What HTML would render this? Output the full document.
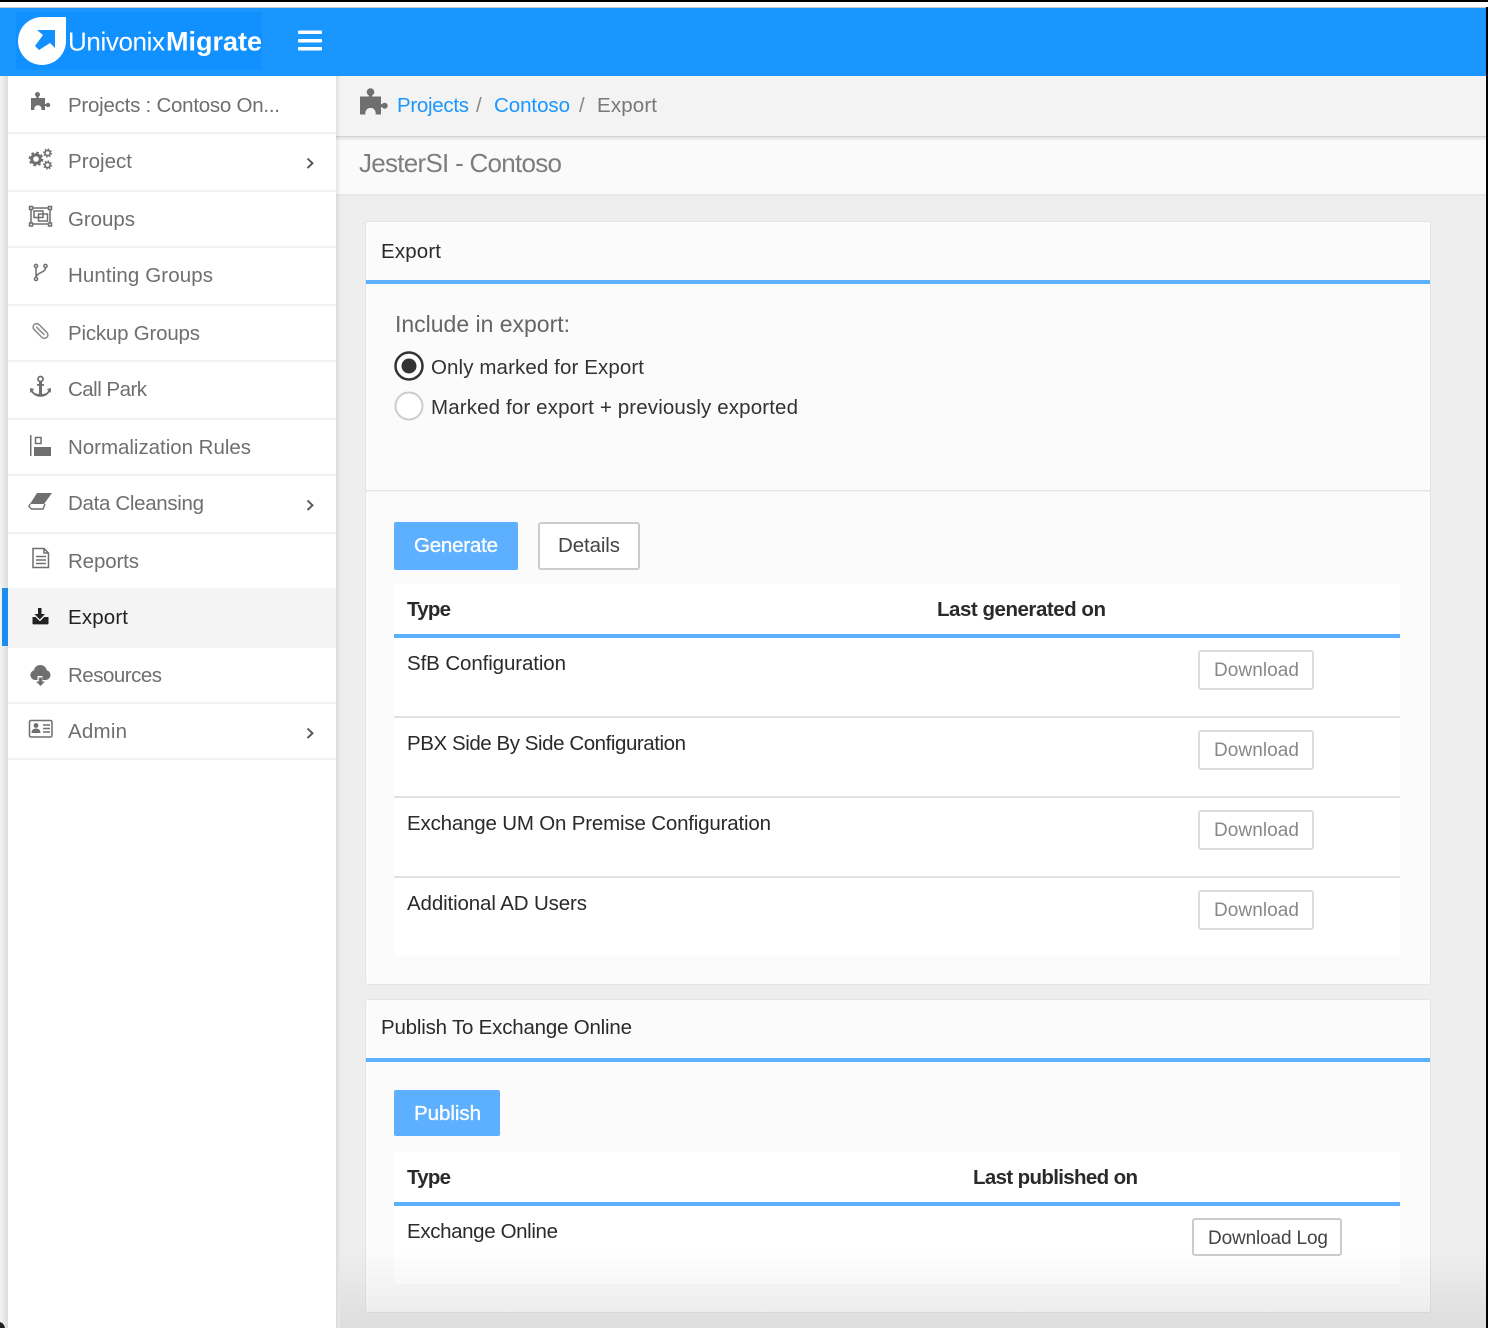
<!DOCTYPE html>
<html><head><meta charset="utf-8"><title>UnivonixMigrate</title>
<style>
html,body{margin:0;padding:0;background:#fff;width:1488px;height:1328px;overflow:hidden}
svg{display:block}
text{font-family:"Liberation Sans",sans-serif;font-size:20.5px;fill:#333}
.n{fill:#6f6f6f}
.b{font-weight:700;fill:#2a2a2a}
.d{font-size:19px;fill:#888}
.i{fill:#6f6f6f}
.o{fill:none;stroke:#6f6f6f;stroke-width:1.5}
.w{fill:#fff;stroke:#fff;stroke-width:.35}
</style></head><body>
<svg width="1488" height="1328" viewBox="0 0 1488 1328" xmlns="http://www.w3.org/2000/svg">
<defs>
<linearGradient id="lg" x1="0" x2="1" y1="0" y2="0"><stop offset="0" stop-color="#f4f4f4"/><stop offset="1" stop-color="#dcdcdc"/></linearGradient>
<linearGradient id="bot" x1="0" x2="0" y1="0" y2="1"><stop offset="0" stop-color="#000" stop-opacity="0"/><stop offset="1" stop-color="#000" stop-opacity=".07"/></linearGradient>
<linearGradient id="sh" x1="0" x2="1" y1="0" y2="0"><stop offset="0" stop-color="#000" stop-opacity=".08"/><stop offset="1" stop-color="#000" stop-opacity="0"/></linearGradient>
<linearGradient id="sv" x1="0" x2="0" y1="0" y2="1"><stop offset="0" stop-color="#000" stop-opacity=".13"/><stop offset="1" stop-color="#000" stop-opacity="0"/></linearGradient>
</defs>

<!-- window chrome -->
<rect width="1488" height="1328" fill="#eee"/>
<rect width="1488" height="2" fill="#000"/>
<rect y="2" width="1488" height="5" fill="#fff"/>
<rect y="7" width="1488" height="1" fill="#ccc"/>

<!-- main content -->
<rect x="336" y="76" width="1150" height="60" fill="#f3f3f3"/>
<rect x="336" y="137" width="1150" height="57" fill="#fafafa"/>
<rect x="336" y="136" width="1150" height="5" fill="url(#sv)"/>
<rect x="336" y="194" width="1150" height="1.5" fill="#e6e6e6"/>

<!-- card 1 -->
<rect x="365" y="221" width="1066" height="764" rx="3" fill="#e4e4e4"/>
<rect x="366" y="222" width="1064" height="762" rx="2" fill="#fbfbfb"/>
<rect x="366" y="280" width="1064" height="4" fill="#5eb1ff"/>
<rect x="366" y="490" width="1064" height="1.5" fill="#e6e6e6"/>
<rect x="394" y="584" width="1006" height="372" fill="#fff"/>
<rect x="394" y="634" width="1006" height="4" fill="#5eb1ff"/>
<rect x="394" y="716" width="1006" height="2" fill="#e2e2e2"/>
<rect x="394" y="796" width="1006" height="2" fill="#e2e2e2"/>
<rect x="394" y="876" width="1006" height="2" fill="#e2e2e2"/>

<!-- card 2 -->
<rect x="365" y="999" width="1066" height="314" rx="3" fill="#e4e4e4"/>
<rect x="366" y="1000" width="1064" height="312" rx="2" fill="#fbfbfb"/>
<rect x="366" y="1058" width="1064" height="4" fill="#5eb1ff"/>
<rect x="394" y="1152" width="1006" height="132" fill="#fff"/>
<rect x="394" y="1202" width="1006" height="4" fill="#5eb1ff"/>

<!-- buttons -->
<rect x="394" y="522" width="124" height="48" rx="2" fill="#5cb0ff"/>
<rect x="539" y="523" width="100" height="46" rx="2" fill="#fff" stroke="#ccc" stroke-width="2"/>
<rect x="1199" y="651" width="114" height="38" rx="2" fill="#fff" stroke="#ddd" stroke-width="2"/>
<rect x="1199" y="731" width="114" height="38" rx="2" fill="#fff" stroke="#ddd" stroke-width="2"/>
<rect x="1199" y="811" width="114" height="38" rx="2" fill="#fff" stroke="#ddd" stroke-width="2"/>
<rect x="1199" y="891" width="114" height="38" rx="2" fill="#fff" stroke="#ddd" stroke-width="2"/>
<rect x="394" y="1090" width="106" height="46" rx="2" fill="#5cb0ff"/>

<!-- radios -->
<circle cx="409" cy="366" r="13.5" fill="#fff" stroke="#333" stroke-width="2.5"/>
<circle cx="409" cy="366" r="7.5" fill="#333"/>
<circle cx="409" cy="406" r="13.5" fill="#fff" stroke="#ccc" stroke-width="2"/>

<!-- bottom fade -->
<rect x="340" y="1250" width="1146" height="78" fill="url(#bot)"/>
<rect x="1193" y="1219" width="148" height="36" rx="2" fill="#fff" stroke="#ccc" stroke-width="2"/>

<!-- sidebar -->
<rect x="0" y="76" width="8" height="1252" fill="url(#lg)"/>
<rect x="8" y="76" width="328" height="1252" fill="#fff"/>
<rect x="336" y="76" width="5" height="1252" fill="url(#sh)"/>
<rect x="8" y="132" width="328" height="2" fill="#f1f1f1"/>
<rect x="8" y="190" width="328" height="2" fill="#f1f1f1"/>
<rect x="8" y="246" width="328" height="2" fill="#f1f1f1"/>
<rect x="8" y="304" width="328" height="2" fill="#f1f1f1"/>
<rect x="8" y="360" width="328" height="2" fill="#f1f1f1"/>
<rect x="8" y="418" width="328" height="2" fill="#f1f1f1"/>
<rect x="8" y="474" width="328" height="2" fill="#f1f1f1"/>
<rect x="8" y="532" width="328" height="2" fill="#f1f1f1"/>
<rect x="8" y="588" width="328" height="60" fill="#f4f4f4"/>
<rect x="2" y="588" width="6" height="58" fill="#1a8eee"/>
<rect x="8" y="702" width="328" height="2" fill="#f1f1f1"/>
<rect x="8" y="758" width="328" height="2" fill="#f1f1f1"/>
<path d="M0 1322q4 1 5 6H0z" fill="#222"/>

<!-- header -->
<rect y="8" width="1486" height="68" fill="#1a96ff"/>
<rect x="16" y="12" width="246" height="58" fill="#1190ff"/>
<path d="M42 17H66V41A24 24 0 1 1 42 17Z" fill="#fff"/>
<path d="M37 30H55V48L50 43 39 50 35 46 43 35Z" fill="#1190ff"/>
<text x="68" y="50.500" style="font-size:26px;fill:#fff" textLength="97" lengthAdjust="spacing">Univonix</text>
<text x="166" y="50.500" style="font-size:27px;font-weight:700;fill:#fff" textLength="96" lengthAdjust="spacing">Migrate</text>
<rect x="298" y="30.500" width="24" height="3.500" rx="1" fill="#fff"/>
<rect x="298" y="39" width="24" height="3.500" rx="1" fill="#fff"/>
<rect x="298" y="47" width="24" height="3.500" rx="1" fill="#fff"/>

<!-- right frame -->
<rect x="1486" y="0" width="2" height="1328" fill="#000"/>
<rect x="1486" y="2" width="2" height="5" fill="#fff"/>

<!-- sidebar icons -->
<circle cx="37.500" cy="94.500" r="2.500" class="i"/>
<rect x="36.300" y="95" width="2.400" height="4" class="i"/>
<circle cx="48" cy="105" r="2.200" class="i"/>
<rect x="44" y="104" width="3" height="2" class="i"/>
<path class="i" d="M31 98H45V110H41.300a3.600 3.600 0 1 0-6.800 0H31Z"/>
<circle cx="36" cy="159" r="4.300" fill="none" stroke="#6f6f6f" stroke-width="3"/>
<circle cx="36" cy="159" r="6.300" fill="none" stroke="#6f6f6f" stroke-width="2.200" stroke-dasharray="2.500 2.450"/>
<circle cx="47.600" cy="153" r="2.600" fill="none" stroke="#6f6f6f" stroke-width="1.700"/>
<circle cx="47.600" cy="153" r="4" fill="none" stroke="#6f6f6f" stroke-width="1.200" stroke-dasharray="1.500 1.640"/>
<circle cx="47.600" cy="165" r="2.600" fill="none" stroke="#6f6f6f" stroke-width="1.700"/>
<circle cx="47.600" cy="165" r="4" fill="none" stroke="#6f6f6f" stroke-width="1.200" stroke-dasharray="1.500 1.640"/>
<g class="o">
<rect x="31" y="208" width="19" height="16"/>
<rect x="29.500" y="206.500" width="3" height="3" fill="#fff"/><rect x="48.500" y="206.500" width="3" height="3" fill="#fff"/>
<rect x="29.500" y="223" width="3" height="3" fill="#fff"/><rect x="48.500" y="223" width="3" height="3" fill="#fff"/>
<rect x="34" y="211" width="9" height="6.500"/><rect x="38.500" y="214" width="9" height="7"/>
<circle cx="36" cy="266" r="1.600"/><circle cx="36" cy="279" r="1.600"/><circle cx="45.500" cy="266" r="1.600"/>
<path d="M36 267.500V277.400M45.500 267.600C45.500 273 37 272 36.300 277"/>
<path d="M33 548.500H44L48.500 553V567.500H33Z"/><path d="M44 548.500V553H48.500M36 556.500H46M36 560H46M36 563.500H46"/>
<rect x="29.500" y="720.500" width="22.500" height="16.500" rx="1.500"/>
</g>
<g transform="rotate(45 40.500 331)" fill="none" stroke="#8a8a8a" stroke-width="1.500">
<rect x="31.500" y="327.500" width="18" height="7" rx="3.500"/>
<path d="M34.500 331H46"/>
</g>
<circle cx="40.500" cy="379" r="2.500" fill="none" stroke="#6f6f6f" stroke-width="1.800"/>
<path class="i" d="M39 381.500h3V394c3.500 0 5.500-1.500 6.300-3.500L46.800 389l4.200-1-.3 5-1.200-1c-1.500 2.800-5 4.800-9 4.800s-7.500-2-9-4.800l-1.200 1-.3-5 4.200 1-1.500 1.500c.8 2 2.800 3.500 6.300 3.500z"/>
<rect x="37" y="384" width="7" height="1.800" class="i"/>
<rect x="30" y="435" width="1.500" height="21" class="i"/>
<rect x="35.500" y="437.500" width="5.500" height="6" fill="none" stroke="#6f6f6f" stroke-width="1.500"/>
<rect x="34" y="447" width="17" height="9" class="i"/>
<path class="i" d="M37 493H52L44 504H30Z"/>
<path d="M30 504L29 506.500 31.500 509H43L45 504" fill="none" stroke="#6f6f6f" stroke-width="1.400"/>
<path fill="#222" d="M38 608h3.500v6H45l-5.200 5.500L34.500 614H38z"/>
<path fill="#222" d="M32.500 617h3.200l3.800 4h.8l3.800-4h4.400v6.500a.9.900 0 0 1-.9.900H33.400a.9.900 0 0 1-.9-.9z"/>
<path class="i" d="M35 680a5 5 0 0 1-1-9.800c.5-3.200 3.300-5.200 6.300-5.200 3.200 0 5.800 2.200 6.500 5.200a5 5 0 0 1-.8 9.800h-3.500V676h-5v4z"/>
<path class="i" d="M38.800 677.500h3.400v4h2.800l-4.500 4.500-4.500-4.500h2.800z"/>
<circle cx="36" cy="725.500" r="2.400" class="i"/>
<path class="i" d="M31.500 733c0-3 2-4.500 4.500-4.500s4.500 1.500 4.500 4.500z"/>
<path class="o" d="M43 725H50M43 728.500H50M43 732H50"/>
<path d="M307.500 158.500L312.500 163.300 307.500 168M307.500 500.500L312.500 505.300 307.500 510M307.500 728.500L312.500 733.300 307.500 738" fill="none" stroke="#555" stroke-width="1.900"/>

<!-- sidebar labels -->
<text class="n" x="68" y="112" textLength="212" lengthAdjust="spacing">Projects : Contoso On...</text>
<text class="n" x="68" y="168" textLength="64" lengthAdjust="spacing">Project</text>
<text class="n" x="68" y="226" textLength="67" lengthAdjust="spacing">Groups</text>
<text class="n" x="68" y="282" textLength="145" lengthAdjust="spacing">Hunting Groups</text>
<text class="n" x="68" y="340" textLength="132" lengthAdjust="spacing">Pickup Groups</text>
<text class="n" x="68" y="396" textLength="79" lengthAdjust="spacing">Call Park</text>
<text class="n" x="68" y="454" textLength="183" lengthAdjust="spacing">Normalization Rules</text>
<text class="n" x="68" y="510" textLength="136" lengthAdjust="spacing">Data Cleansing</text>
<text class="n" x="68" y="568" textLength="71" lengthAdjust="spacing">Reports</text>
<text x="68" y="624" style="fill:#222" textLength="60" lengthAdjust="spacing">Export</text>
<text class="n" x="68" y="682" textLength="94" lengthAdjust="spacing">Resources</text>
<text class="n" x="68" y="738" textLength="59" lengthAdjust="spacing">Admin</text>

<!-- breadcrumb -->
<circle cx="370.500" cy="92" r="3.800" class="i"/>
<rect x="368.800" y="93" width="3.400" height="5" class="i"/>
<circle cx="384.700" cy="105.700" r="3" class="i"/>
<rect x="380" y="104.200" width="3.500" height="3" class="i"/>
<path class="i" d="M360 96.500H381V114.500H375.500a5.200 5.200 0 1 0-10 0H360Z"/>
<text x="397" y="112" style="fill:#1a96ff" textLength="72" lengthAdjust="spacing">Projects</text>
<text x="476" y="112" style="fill:#888">/</text>
<text x="494" y="112" style="fill:#1a96ff" textLength="76" lengthAdjust="spacing">Contoso</text>
<text x="579" y="112" style="fill:#888">/</text>
<text x="597" y="112" style="fill:#777" textLength="60" lengthAdjust="spacing">Export</text>
<text x="359" y="172" style="font-size:26px;fill:#7d7d7d" textLength="203" lengthAdjust="spacing">JesterSI - Contoso</text>

<!-- card 1 text -->
<text x="381" y="258" textLength="60" lengthAdjust="spacing" style="fill:#2a2a2a">Export</text>
<text x="395" y="332" style="font-size:23px;fill:#666" textLength="175" lengthAdjust="spacing">Include in export:</text>
<text x="431" y="374" textLength="213" lengthAdjust="spacing">Only marked for Export</text>
<text x="431" y="414" textLength="367" lengthAdjust="spacing">Marked for export + previously exported</text>
<text class="w" x="414" y="552" textLength="84" lengthAdjust="spacing">Generate</text>
<text x="558" y="552" style="fill:#444" textLength="62" lengthAdjust="spacing">Details</text>
<text class="b" x="407" y="616" textLength="44" lengthAdjust="spacing">Type</text>
<text class="b" x="937" y="616" textLength="169" lengthAdjust="spacing">Last generated on</text>
<text x="407" y="670" style="fill:#2a2a2a" textLength="159" lengthAdjust="spacing">SfB Configuration</text>
<text x="407" y="750" style="fill:#2a2a2a" textLength="279" lengthAdjust="spacing">PBX Side By Side Configuration</text>
<text x="407" y="830" style="fill:#2a2a2a" textLength="364" lengthAdjust="spacing">Exchange UM On Premise Configuration</text>
<text x="407" y="910" style="fill:#2a2a2a" textLength="180" lengthAdjust="spacing">Additional AD Users</text>
<text class="d" x="1214" y="676" textLength="85" lengthAdjust="spacing">Download</text>
<text class="d" x="1214" y="756" textLength="85" lengthAdjust="spacing">Download</text>
<text class="d" x="1214" y="836" textLength="85" lengthAdjust="spacing">Download</text>
<text class="d" x="1214" y="916" textLength="85" lengthAdjust="spacing">Download</text>

<!-- card 2 text -->
<text x="381" y="1034" style="fill:#2a2a2a" textLength="251" lengthAdjust="spacing">Publish To Exchange Online</text>
<text class="w" x="414" y="1120" textLength="67" lengthAdjust="spacing">Publish</text>
<text class="b" x="407" y="1184" textLength="44" lengthAdjust="spacing">Type</text>
<text class="b" x="973" y="1184" textLength="165" lengthAdjust="spacing">Last published on</text>
<text x="407" y="1238" style="fill:#2a2a2a" textLength="151" lengthAdjust="spacing">Exchange Online</text>
<text x="1208" y="1244" style="font-size:19px;fill:#444" textLength="120" lengthAdjust="spacing">Download Log</text>
</svg>
</body></html>
